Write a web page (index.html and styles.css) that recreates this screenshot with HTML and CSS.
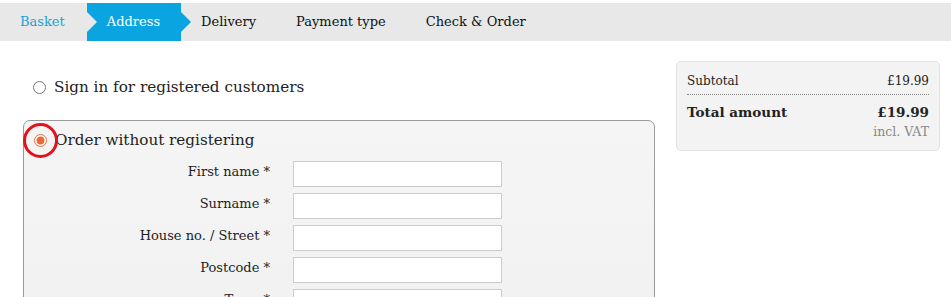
FILE: index.html
```html
<!DOCTYPE html>
<html lang="en">
<head>
  <meta charset="UTF-8" />
  <title>Checkout - Address</title>
  <meta name="viewport" content="width=device-width, initial-scale=1.0"/>
  <link rel="stylesheet" href="styles.css">
</head>
<body>
<nav class="steps">
  <a class="step done" href="#">Basket</a>
  <span class="step active">Address</span>
  <span class="step">Delivery</span>
  <span class="step">Payment type</span>
  <span class="step">Check &amp; Order</span>
</nav>

<div class="checkout">
  <main class="address">
    <label class="choice">
      <input type="radio" name="mode">
      <span>Sign in for registered customers</span>
    </label>

    <fieldset class="guest">
      <label class="choice">
        <span class="mark"><input type="radio" name="mode" checked></span>
        <span>Order without registering</span>
      </label>

      <div class="fields">
        <label for="firstname">First name *</label>
        <input type="text" id="firstname">
        <label for="surname">Surname *</label>
        <input type="text" id="surname">
        <label for="street">House no. / Street *</label>
        <input type="text" id="street">
        <label for="postcode">Postcode *</label>
        <input type="text" id="postcode">
        <label for="town">Town *</label>
        <input type="text" id="town">
      </div>
    </fieldset>
  </main>

  <aside class="summary">
    <div class="row sub">
      <span>Subtotal</span>
      <span>£19.99</span>
    </div>
    <div class="row total">
      <span>Total amount</span>
      <span>£19.99</span>
    </div>
    <div class="vat">incl. VAT</div>
  </aside>
</div>
</body>
</html>
```

FILE: styles.css
```css
body {
  font-family: 'DejaVu Serif', serif;
  color: #222;
  background: white;
  margin: 0;
  padding-top: 3px;
}

.steps {
  display: flex;
  height: 38px;
  background: #e8e8e8;
  font-size: 13px;
  line-height: 38px;
}

.step {
  position: relative;
  padding: 0 20px;
  color: #111;
  text-decoration: none;
}

.step.done {
  color: #1e9fd6;
  padding-right: 22px;
}

.step.active {
  background: #0aa5e0;
  color: white;
  padding-right: 21px;
}

.step.active::before {
  content: "";
  position: absolute;
  left: 0;
  top: 9px;
  border-top: 10px solid transparent;
  border-bottom: 10px solid transparent;
  border-left: 10px solid #e8e8e8;
}

.step.active::after {
  content: "";
  position: absolute;
  right: -10px;
  top: 9px;
  border-top: 10px solid transparent;
  border-bottom: 10px solid transparent;
  border-left: 10px solid #0aa5e0;
}

.checkout {
  display: flex;
  align-items: flex-start;
  padding-top: 20px;
}

.address {
  width: 632px;
  margin-left: 23px;
  padding-top: 2px;
}

.choice {
  display: flex;
  align-items: center;
  font-size: 15.2px;
  height: 48px;
  padding-left: 10px;
}

.choice input {
  margin: 0 8px 0 0;
  width: 13px;
  height: 13px;
  accent-color: #e86a3a;
}

.mark {
  position: relative;
  display: flex;
}

.mark::after {
  content: "";
  position: absolute;
  left: -11px;
  top: -11px;
  width: 29px;
  height: 29px;
  border: 3px solid #e5101a;
  border-radius: 50%;
}

.guest {
  margin: 9px 0 0;
  padding: 0 0 20px;
  border: 1px solid #999;
  border-radius: 7px;
  background: linear-gradient(#f5f5f5, #f1f1f1);
}

.guest .choice {
  height: 36px;
  padding-top: 1px;
}

.fields {
  display: grid;
  grid-template-columns: 246px 209px;
  column-gap: 23px;
  row-gap: 6px;
  font-size: 13px;
  padding-top: 3px;
}

.fields label {
  text-align: right;
  line-height: 21px;
}

.fields input {
  height: 26px;
  box-sizing: border-box;
  border: 1px solid #ccc;
  background: white;
  margin: 0;
}

.summary {
  width: 242px;
  margin-left: 21px;
  padding: 7px 10px 13px;
  background: #f3f3f3;
  border: 1px solid #e2e2e2;
  border-radius: 5px;
}

.row {
  display: flex;
  justify-content: space-between;
}

.row.sub {
  font-size: 12px;
  line-height: 25px;
  border-bottom: 1px dotted #888;
}

.row.total {
  font-size: 13.5px;
  font-weight: bold;
  line-height: 30px;
  padding-top: 2px;
}

.vat {
  text-align: right;
  font-size: 12.5px;
  color: #888;
  line-height: 10px;
}
```
